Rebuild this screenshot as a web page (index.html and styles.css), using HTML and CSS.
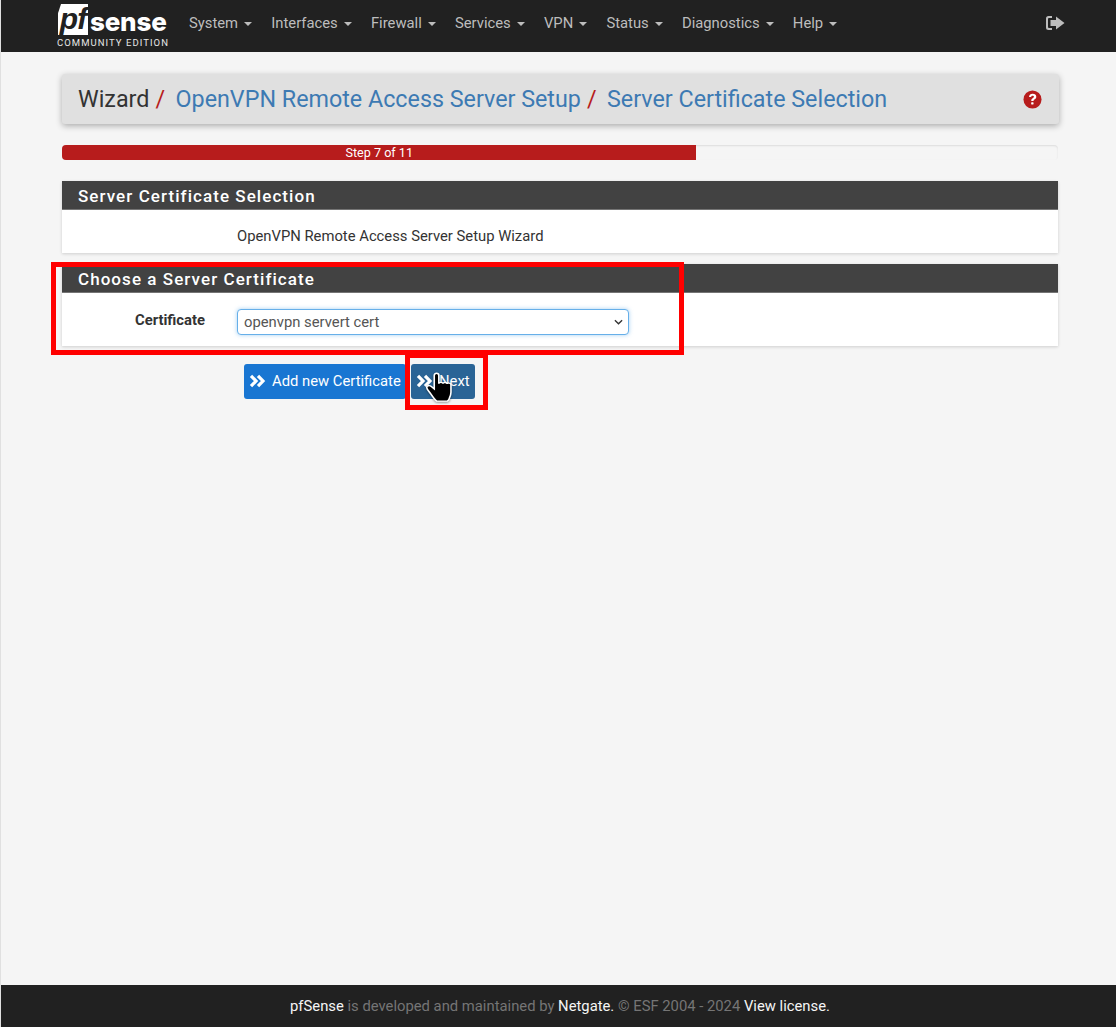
FILE: index.html
```html
<!DOCTYPE html>
<html lang="en">
<head>
<meta charset="utf-8">
<title>pfSense Wizard</title>
<link rel="stylesheet" href="styles.css">
</head>
<body>
<header class="navbar">
  <div class="brand">
    <div class="logo-top">
      <span class="logo-pf">pf</span><span class="logo-sense">sense</span>
    </div>
    <div class="logo-sub">COMMUNITY EDITION</div>
  </div>
  <nav class="menu">
    <span class="menu-item">System<i class="caret"></i></span>
    <span class="menu-item">Interfaces<i class="caret"></i></span>
    <span class="menu-item">Firewall<i class="caret"></i></span>
    <span class="menu-item">Services<i class="caret"></i></span>
    <span class="menu-item">VPN<i class="caret"></i></span>
    <span class="menu-item">Status<i class="caret"></i></span>
    <span class="menu-item">Diagnostics<i class="caret"></i></span>
    <span class="menu-item">Help<i class="caret"></i></span>
  </nav>
  <svg class="logout" viewBox="0 0 20 16" aria-hidden="true">
    <path d="M7 1H3.500A2.500 2.500 0 0 0 1 3.500v9A2.500 2.500 0 0 0 3.500 15H7v-2H4a1 1 0 0 1-1-1V4a1 1 0 0 1 1-1h3z"/>
    <path d="M11 1.500 19.500 8 11 14.500V11H5.500V5H11z"/>
  </svg>
</header>

<main class="content">
  <div class="crumbs">
    <span class="crumb-plain">Wizard</span><span class="slash">/</span>
    <span class="crumb-link">OpenVPN Remote Access Server Setup</span><span class="slash">/</span>
    <span class="crumb-link">Server Certificate Selection</span>
    <svg class="help" viewBox="0 0 20 20" aria-hidden="true">
      <circle cx="10" cy="10" r="9.500" fill="#b71c1c"/>
      <path d="M6.300 7.400C6.500 5.200 8.100 4 10.200 4c2.200 0 3.800 1.300 3.800 3.100 0 1.500-.9 2.200-1.900 2.900-.8.500-1 .8-1 1.600H8.700c0-1.500.4-2.200 1.500-2.900.8-.5 1.300-.9 1.300-1.500 0-.7-.6-1.100-1.400-1.100-.9 0-1.400.5-1.500 1.300z" fill="#fff"/>
      <rect x="8.600" y="12.800" width="2.500" height="2.500" rx=".5" fill="#fff"/>
    </svg>
  </div>

  <div class="progress">
    <div class="progress-bar">Step 7 of 11</div>
  </div>

  <section class="panel">
    <h2 class="panel-heading">Server Certificate Selection</h2>
    <div class="panel-body panel-body-text">
      <span class="field-value">OpenVPN Remote Access Server Setup Wizard</span>
    </div>
  </section>

  <section class="panel">
    <h2 class="panel-heading">Choose a Server Certificate</h2>
    <div class="panel-body panel-body-form">
      <label class="field-label">Certificate</label>
      <div class="select">
        <span>openvpn servert cert</span>
        <svg class="chevron" viewBox="0 0 10 6" aria-hidden="true"><path d="M1 1l4 4 4-4" fill="none" stroke="#333" stroke-width="1.500"/></svg>
      </div>
    </div>
  </section>

  <div class="actions">
    <span class="btn btn-add">
      <svg class="dbl" viewBox="0 0 16 14" aria-hidden="true"><path d="M1.500 1.800 6.500 7l-5 5.200M8.500 1.800l5 5.200-5 5.200" fill="none" stroke="#fff" stroke-width="3.200"/></svg>
      Add new Certificate
    </span>
    <span class="btn btn-next">
      <svg class="dbl" viewBox="0 0 16 14" aria-hidden="true"><path d="M1.500 1.800 6.500 7l-5 5.200M8.500 1.800l5 5.200-5 5.200" fill="none" stroke="#fff" stroke-width="3.200"/></svg>
      Next
    </span>
  </div>
</main>

<footer class="footer">
  <span class="foot-bright">pfSense</span>&nbsp;is developed and maintained by&nbsp;<span class="foot-bright">Netgate.</span>&nbsp;© ESF 2004 - 2024&nbsp;<span class="foot-bright">View license.</span>
</footer>

<div class="mark mark-panel"></div>
<div class="mark mark-next"></div>
<svg class="hand" viewBox="0 0 26 32" preserveAspectRatio="none" aria-hidden="true">
  <path d="M8 3.500c0-3 4-3 4 0V12c0-1.800 3.600-1.800 3.600 0 0-1.600 3.600-1.600 3.600.3 0-1.300 3.300-1.300 3.300.7v8c0 3-.6 4.500-1.500 6.500-.4 1-1 2-1.500 2.500H10c-1-1-3-4-5-7.500C3.500 20 1.500 18 1.500 16c0-2 2.500-2.500 4-1L8 17.500z" fill="#000" stroke="#fff" stroke-width="1.400"/>
</svg>
</body>
</html>
```
FILE: styles.css
```css
* { box-sizing: border-box; }
html, body { margin: 0; height: 100%; }
body {
  min-height: 1027px;
  display: flex;
  flex-direction: column;
  background: #f5f5f5;
  border-left: 1px solid #e0e0e0;
  font-family: Roboto, "Liberation Sans", sans-serif;
  font-size: 14.800px;
  color: #333;
  overflow: hidden;
}

.navbar {
  height: 52px;
  margin-left: -1px;
  flex: none;
  background: #212121;
  display: flex;
  align-items: flex-start;
  padding-left: 58px;
  position: relative;
}
.brand { width: 111px; padding-top: 4px; }
.logo-top { display: flex; align-items: center; height: 31px; }
.logo-pf {
  width: 30px;
  height: 31px;
  background: #fff;
  color: #212121;
  font: italic 700 30px/30px "Liberation Sans", sans-serif;
  letter-spacing: -1px;
  text-align: center;
  clip-path: polygon(10% 0, 100% 0, 100% 100%, 0 100%, 0 30%);
}
.logo-sense {
  margin-left: 2px;
  color: #fff;
  font: 800 26px/31px Inter, "Liberation Sans", sans-serif;
  letter-spacing: -.2px;
  padding-top: 3px;
}
.logo-sub {
  color: #e6e6e6;
  font-size: 9.500px;
  line-height: 11px;
  letter-spacing: 1.050px;
  margin: 2px 0 0 -1px;
  white-space: nowrap;
}
.menu { display: flex; margin-left: 20px; padding-top: 14px; }
.menu-item {
  color: #bdbdbd;
  font-size: 14.800px;
  line-height: 18px;
  margin-right: 19.200px;
  white-space: nowrap;
}
.caret {
  display: inline-block;
  margin-left: 6px;
  vertical-align: 2px;
  border-top: 4px solid #bdbdbd;
  border-left: 4px solid transparent;
  border-right: 4px solid transparent;
}
.logout {
  position: absolute;
  left: 1045px;
  top: 15px;
  width: 20px;
  height: 16px;
  fill: #bdbdbd;
}

.content { flex: 1; padding: 22px 57px 0 61px; }

.crumbs {
  height: 50px;
  background: #e0e0e0;
  border-radius: 3px;
  box-shadow: 0 2px 6px rgba(0,0,0,.3);
  display: flex;
  align-items: center;
  padding: 0 17px 0 16px;
  font-size: 23.300px;
  white-space: nowrap;
}
.crumb-plain { color: #333; }
.crumb-link { color: #3d7ab3; }
.slash { color: #b71c1c; margin: 0 10.500px 0 6px; }
.help { width: 19px; height: 19px; margin-left: auto; }

.progress {
  margin-top: 21px;
  margin-right: 1px;
  height: 15px;
  background: #f5f5f5;
  border-radius: 4px;
  box-shadow: inset 0 1px 2px rgba(0,0,0,.1);
  overflow: hidden;
}
.progress-bar {
  width: 63.700%;
  height: 100%;
  background: #b71c1c;
  color: #fff;
  font-size: 12.600px;
  line-height: 16px;
  text-align: center;
}

.panel { box-shadow: 0 1px 3px rgba(0,0,0,.16); background: #fff; margin-right: 1px; }
.progress + .panel { margin-top: 21px; }
.panel + .panel { margin-top: 11px; }
.panel-heading {
  margin: 0;
  height: 29px;
  padding-left: 16px;
  background: #424242;
  border-bottom: 1px solid #757575;
  color: #fff;
  font-size: 17px;
  font-weight: 500;
  line-height: 30px;
  letter-spacing: 1.060px;
}
.panel-body { display: flex; align-items: flex-start; }
.panel-body-text { height: 43px; padding: 18px 0 0 175px; line-height: 16px; }
.field-value { color: #333; font-size: 14.800px; }
.panel-body-form { height: 53px; padding-top: 17px; }
.field-label {
  width: 143px;
  text-align: right;
  font-weight: 700;
  font-size: 14.800px;
  line-height: 20px;
  color: #333;
}
.select {
  margin-left: 32px;
  margin-top: -1px;
  width: 392px;
  height: 26px;
  border: 1px solid #66afe9;
  border-radius: 4px;
  box-shadow: 0 0 4px rgba(102,175,233,.6);
  display: flex;
  align-items: center;
  justify-content: space-between;
  padding: 0 5px 1px 6px;
  color: #555;
  font-size: 14.800px;
  background: #fff;
}
.chevron { width: 9px; height: 6px; }

.actions { display: flex; gap: 5px; margin: 18px 0 0 182px; }
.btn {
  height: 35px;
  border-radius: 3px;
  display: flex;
  align-items: center;
  padding: 0 5px 2px;
  gap: 6px;
  color: #fff;
  font-size: 14.800px;
  white-space: nowrap;
}
.btn-add { background: #1976d2; width: 162px; }
.btn-next { background: #2a6496; width: 64px; }
.dbl { width: 17px; height: 14px; flex: none; }

.footer {
  height: 42px;
  flex: none;
  margin-left: -1px;
  padding-left: 4px;
  background: #212121;
  color: #757575;
  display: flex;
  align-items: center;
  justify-content: center;
  font-size: 14.800px;
}
.foot-bright { color: #f5f5f5; }

.mark { position: absolute; border: 5px solid #f00; }
.mark-panel { left: 51px; top: 262px; width: 633px; height: 93px; }
.mark-next { left: 405px; top: 353px; width: 83px; height: 57px; }
.hand {
  position: absolute;
  left: 425px;
  top: 372px;
  width: 30px;
  height: 31px;
  filter: drop-shadow(0 1px 1px rgba(0,0,0,.4));
}
```
